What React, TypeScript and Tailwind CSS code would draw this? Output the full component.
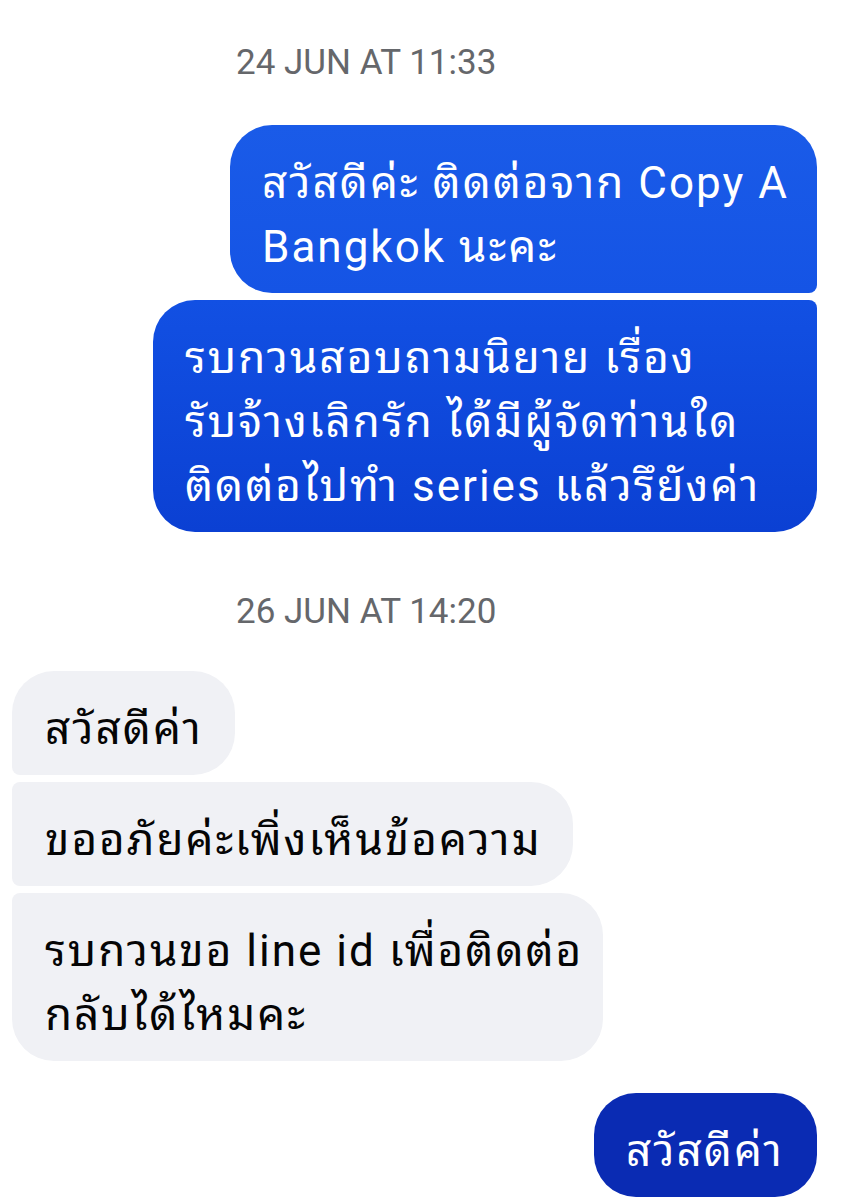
import React from "react";

const Stamp = ({ children, className = "" }: { children: React.ReactNode; className?: string }) => (
  <div className={`pl-[236px] text-[35px] leading-[36px] text-[#65676b] whitespace-nowrap ${className}`}>{children}</div>
);

export default function App() {
  return (
    <div className="w-[847px] h-[1200px] overflow-hidden bg-white font-[Roboto,'Noto_Sans_Thai_Looped','Waree','Loma','Garuda','Noto_Sans_Thai',sans-serif]">
      <Stamp className="pt-[45px]">24 JUN AT 11:33</Stamp>

      <div className="mt-[44px] flex flex-col items-end gap-[7px] pr-[30px]">
        <div className="w-[587px] rounded-[42px] rounded-br-[8px] bg-gradient-to-b from-[#1a5be8] to-[#1554e5] px-[32px] pt-[26px] pb-[14px] text-[44px] leading-[64px] tracking-[2px] text-white whitespace-nowrap">
          สวัสดีค่ะ ติดต่อจาก Copy A
          <br />
          Bangkok นะคะ
        </div>
        <div className="w-[664px] rounded-[42px] rounded-tr-[8px] bg-gradient-to-b from-[#1250e3] to-[#0b40d3] px-[32px] pt-[26px] pb-[14px] text-[44px] leading-[64px] tracking-[2px] text-white whitespace-nowrap">
          รบกวนสอบถามนิยาย เรื่อง
          <br />
          รับจ้างเลิกรัก ได้มีผู้จัดท่านใด
          <br />
          ติดต่อไปทำ series แล้วรึยังค่า
        </div>
      </div>

      <Stamp className="mt-[62px]">26 JUN AT 14:20</Stamp>

      <div className="mt-[41px] flex flex-col items-start gap-[7px] pl-[12px]">
        <div className="w-[223px] rounded-[42px] rounded-bl-[8px] bg-[#f0f1f5] px-[33px] pt-[26px] pb-[14px] text-[44px] leading-[64px] tracking-[2px] text-[#050505] whitespace-nowrap">
          สวัสดีค่า
        </div>
        <div className="w-[561px] rounded-[42px] rounded-l-[8px] bg-[#f0f1f5] px-[33px] pt-[26px] pb-[14px] text-[44px] leading-[64px] tracking-[2px] text-[#050505] whitespace-nowrap">
          ขออภัยค่ะเพิ่งเห็นข้อความ
        </div>
        <div className="w-[591px] rounded-[42px] rounded-tl-[8px] bg-[#f0f1f5] px-[33px] pt-[26px] pb-[14px] text-[44px] leading-[64px] tracking-[2px] text-[#050505] whitespace-nowrap">
          รบกวนขอ line id เพื่อติดต่อ
          <br />
          กลับได้ไหมคะ
        </div>
      </div>

      <div className="mt-[32px] flex flex-col items-end pr-[30px]">
        <div className="w-[223px] rounded-[42px] bg-[#0a2bb3] px-[32px] pt-[26px] pb-[14px] text-[44px] leading-[64px] tracking-[2px] text-white whitespace-nowrap">
          สวัสดีค่า
        </div>
      </div>
    </div>
  );
}
